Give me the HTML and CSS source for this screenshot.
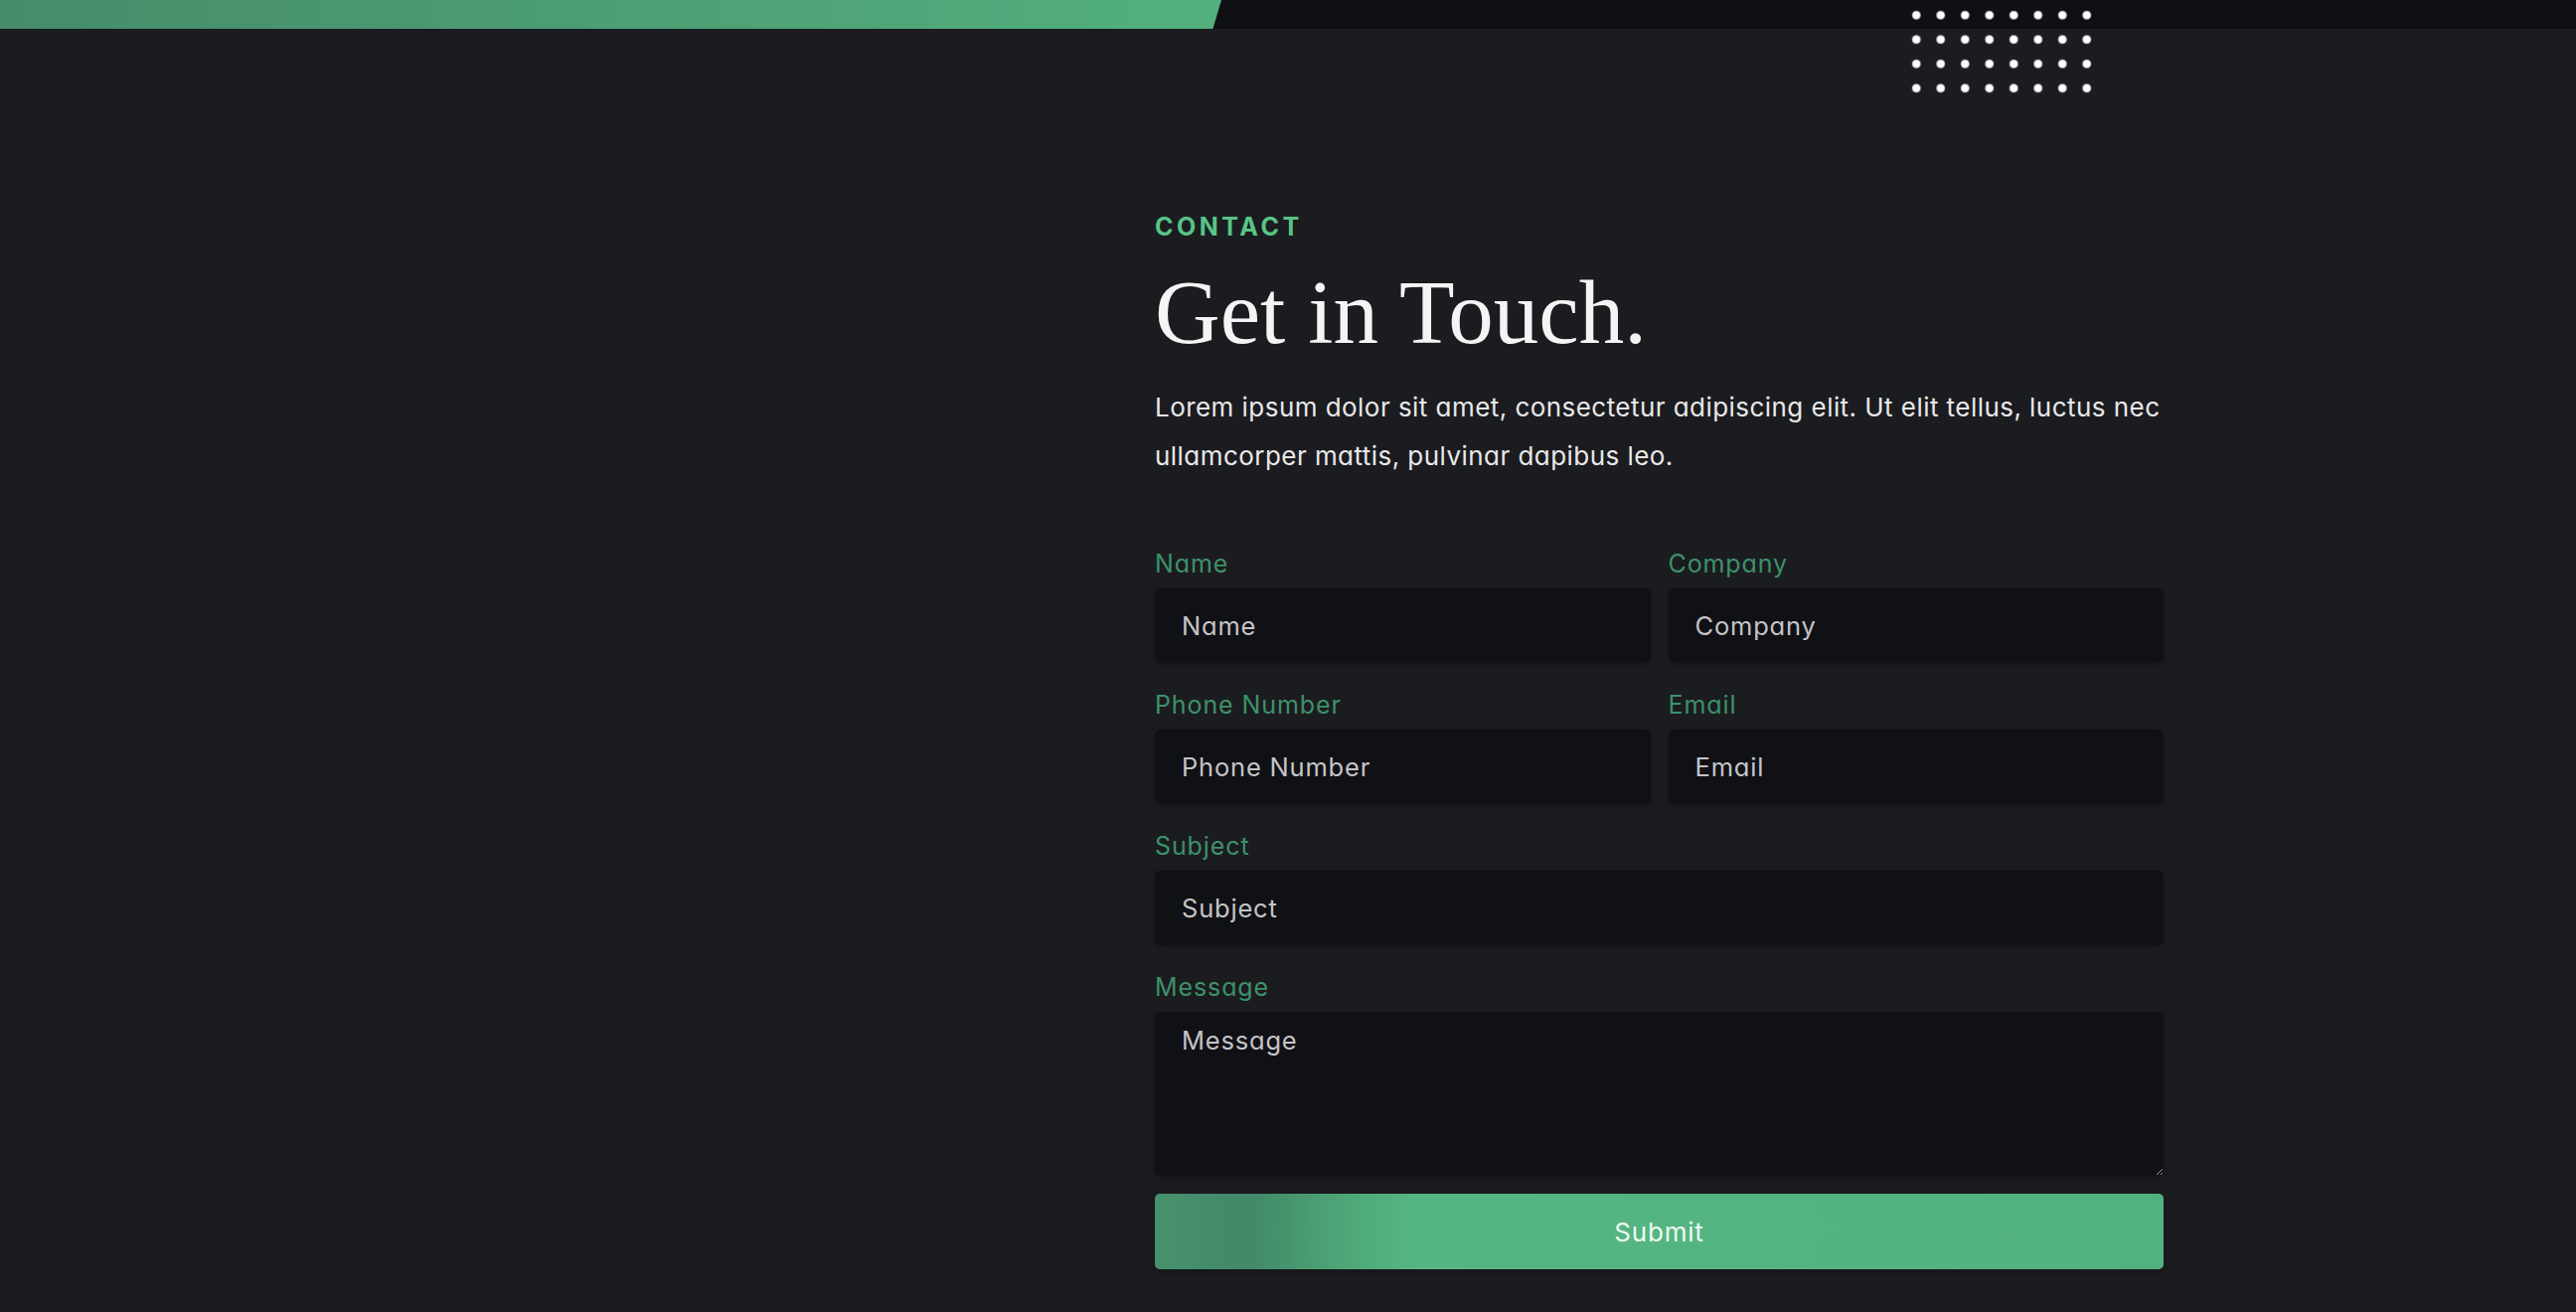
FILE: index.html
```html
<!DOCTYPE html>
<html lang="en">
<head>
    <meta charset="UTF-8">
    <meta name="viewport" content="width=device-width, initial-scale=1.0">
    <title>Contact</title>
    <link rel="stylesheet" href="styles.css">
</head>
<body>
    <div class="top-strip">
        <div class="top-accent"></div>
        <div class="top-dark"></div>
        <div class="dots"></div>
    </div>
    <section class="contact">
        <div class="contact-media"></div>
        <div class="contact-body">
            <p class="eyebrow">CONTACT</p>
            <h1>Get in Touch.</h1>
            <p class="lead">Lorem ipsum dolor sit amet, consectetur adipiscing elit. Ut elit tellus, luctus nec ullamcorper mattis, pulvinar dapibus leo.</p>
            <form class="contact-form">
                <div class="field">
                    <label for="name">Name</label>
                    <input type="text" id="name" placeholder="Name">
                </div>
                <div class="field">
                    <label for="company">Company</label>
                    <input type="text" id="company" placeholder="Company">
                </div>
                <div class="field">
                    <label for="phone">Phone Number</label>
                    <input type="text" id="phone" placeholder="Phone Number">
                </div>
                <div class="field">
                    <label for="email">Email</label>
                    <input type="email" id="email" placeholder="Email">
                </div>
                <div class="field wide">
                    <label for="subject">Subject</label>
                    <input type="text" id="subject" placeholder="Subject">
                </div>
                <div class="field wide">
                    <label for="message">Message</label>
                    <textarea id="message" placeholder="Message"></textarea>
                </div>
                <button type="button" class="submit-btn">Submit</button>
            </form>
        </div>
    </section>
</body>
</html>
```

FILE: styles.css
```css
body {
    margin: 0;
    padding: 0;
    background-color: #1b1c20;
    font-family: Inter, "Noto Sans", sans-serif;
    font-feature-settings: "cv11" 1;
    color: #ececec;
    height: 1320px;
    overflow: hidden;
}

.top-strip {
    position: relative;
    display: flex;
    height: 29px;
}

.top-accent {
    width: 1229px;
    background: linear-gradient(90deg, #468c6a, #53b07e);
    clip-path: polygon(0 0, 100% 0, 99.3% 100%, 0 100%);
}

.top-dark {
    flex: 1;
    margin-left: -9px;
    background-color: #0f1014;
}

.dots {
    position: absolute;
    left: 1916px;
    top: 3px;
    width: 196px;
    height: 98px;
    background-image: radial-gradient(circle, #ffffff 3.5px, rgba(255, 255, 255, 0) 5px);
    background-size: 24.5px 24.5px;
}

.contact {
    width: 1762px;
    margin: 0 auto;
    display: grid;
    grid-template-columns: 1fr 1015px;
    padding-top: 181px;
}

.contact-body {
    display: flex;
    flex-direction: column;
}

.eyebrow {
    margin: 0;
    color: #58c486;
    font-size: 25px;
    font-weight: 700;
    letter-spacing: 3.5px;
    line-height: 36px;
}

h1 {
    margin: 19px 0 0;
    font-family: "Liberation Serif", "Times New Roman", serif;
    font-weight: 400;
    font-size: 91px;
    line-height: 100px;
    color: #f4f4f4;
}

.lead {
    margin: 20px 0 0;
    font-size: 26px;
    letter-spacing: 0.45px;
    line-height: 49px;
    color: #e8e8e8;
}

.contact-form {
    margin-top: 66px;
    display: grid;
    grid-template-columns: 1fr 1fr;
    column-gap: 18px;
}

.field {
    display: flex;
    flex-direction: column;
    margin-bottom: 24px;
}

.field.wide {
    grid-column: 1 / -1;
}

.field label {
    font-size: 25px;
    letter-spacing: 0.9px;
    line-height: 36px;
    color: #3e9169;
    margin-bottom: 7px;
}

.field input,
.field textarea {
    box-sizing: border-box;
    height: 75px;
    padding: 0 27px;
    border: none;
    border-radius: 6px;
    background-color: #101115;
    color: #e0e0e0;
    font-family: Inter, "Noto Sans", sans-serif;
    font-feature-settings: "cv11" 1;
    font-size: 25.5px;
    letter-spacing: 0.8px;
    outline: none;
    box-shadow: 0 2px 6px rgba(0, 0, 0, 0.25);
}

.field textarea {
    height: 165px;
    padding: 10px 27px;
    line-height: 37px;
    resize: vertical;
}

.field input::placeholder,
.field textarea::placeholder {
    color: #c4c4c6;
}

.contact-form .field:last-of-type {
    margin-bottom: 18px;
}

.submit-btn {
    grid-column: 1 / -1;
    height: 76px;
    border: none;
    border-radius: 5px;
    background: linear-gradient(90deg, #47926e 0, #428a69 80px, #428a69 100px, #4ea677 190px, #55b682 260px, #52b27f 100%);
    color: #f0faf4;
    font-family: Inter, "Noto Sans", sans-serif;
    font-feature-settings: "cv11" 1;
    font-size: 26px;
    letter-spacing: 0.8px;
    cursor: pointer;
    box-shadow: 0 2px 6px rgba(0, 0, 0, 0.3);
}
```
